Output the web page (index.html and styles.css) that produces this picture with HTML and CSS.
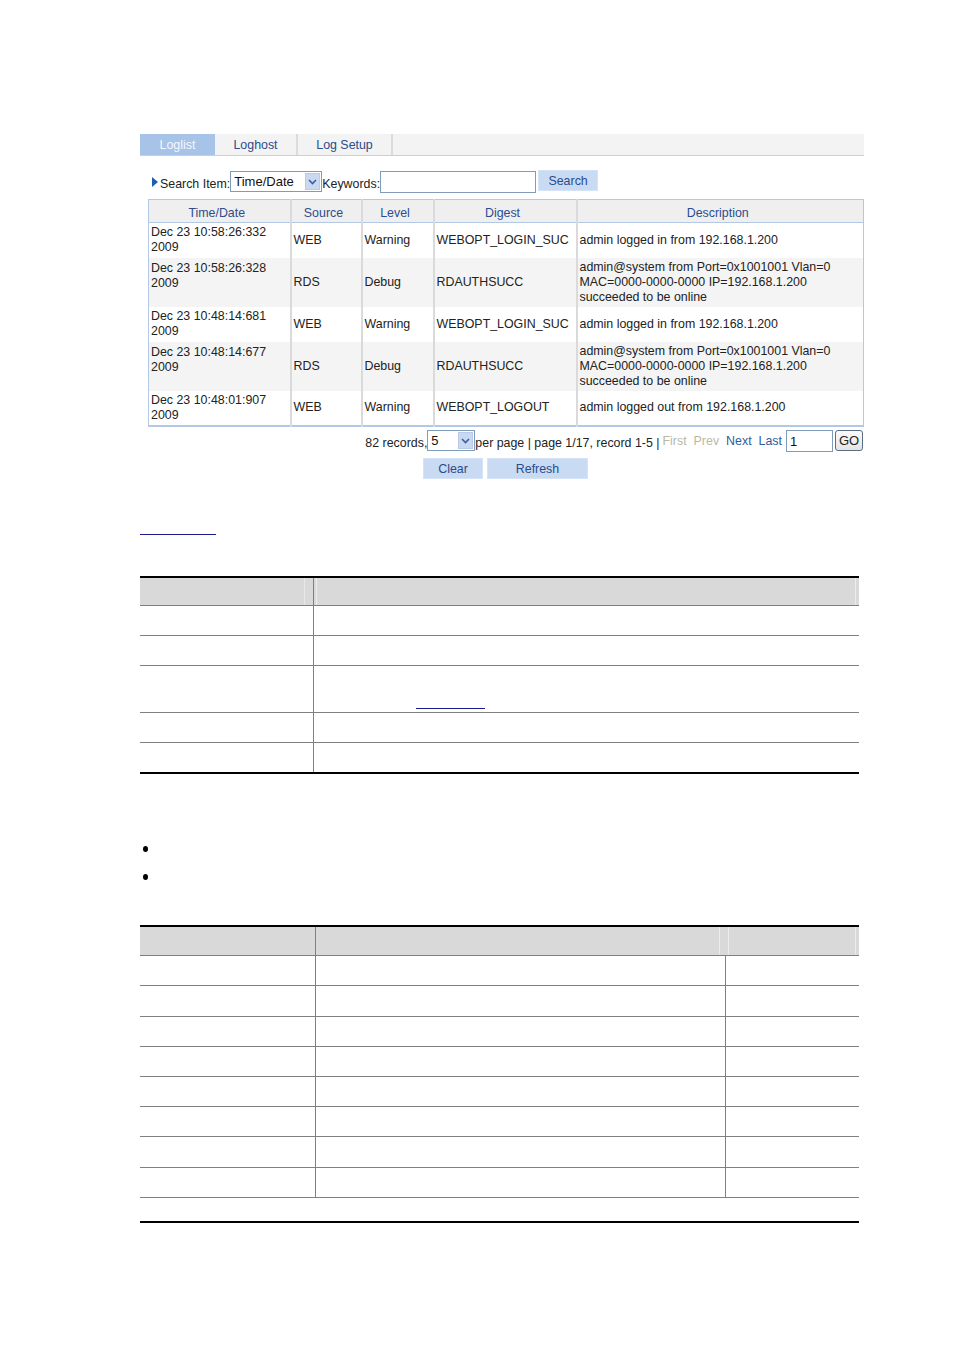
FILE: index.html
```html
<!DOCTYPE html>
<html>
<head>
<meta charset="utf-8">
<link rel="stylesheet" href="styles.css">
</head>
<body>
<div class="page">
  <div class="webui">
    <div class="tabs">
      <div class="tab tab-active">Loglist</div>
      <div class="tab tab-loghost">Loghost</div>
      <div class="tab tab-setup">Log Setup</div>
    </div>

    <div class="search-row">
      <span class="tri"></span>
      <span class="lbl">Search Item:</span>
      <div class="select sel-item">
        <span class="sel-text">Time/Date</span>
        <span class="sel-btn"><svg width="9" height="6" viewBox="0 0 9 6"><path d="M1 1 L4.5 4.5 L8 1" fill="none" stroke="#3d5f99" stroke-width="1.6"/></svg></span>
      </div>
      <span class="lbl">Keywords:</span>
      <div class="input kw"></div>
      <div class="btn btn-search">Search</div>
    </div>

    <table class="log">
      <colgroup>
        <col class="c1"><col class="c2"><col class="c3"><col class="c4"><col class="c5">
      </colgroup>
      <thead>
        <tr><th>Time/Date</th><th>Source</th><th>Level</th><th>Digest</th><th>Description</th></tr>
      </thead>
      <tbody>
        <tr class="r2l"><td>Dec 23 10:58:26:332<br>2009</td><td>WEB</td><td>Warning</td><td>WEBOPT_LOGIN_SUC</td><td>admin logged in from 192.168.1.200</td></tr>
        <tr class="alt r3l"><td class="top">Dec 23 10:58:26:328<br>2009</td><td>RDS</td><td>Debug</td><td>RDAUTHSUCC</td><td>admin@system from Port=0x1001001 Vlan=0<br>MAC=0000-0000-0000 IP=192.168.1.200<br>succeeded to be online</td></tr>
        <tr class="r2l"><td>Dec 23 10:48:14:681<br>2009</td><td>WEB</td><td>Warning</td><td>WEBOPT_LOGIN_SUC</td><td>admin logged in from 192.168.1.200</td></tr>
        <tr class="alt r3l"><td class="top">Dec 23 10:48:14:677<br>2009</td><td>RDS</td><td>Debug</td><td>RDAUTHSUCC</td><td>admin@system from Port=0x1001001 Vlan=0<br>MAC=0000-0000-0000 IP=192.168.1.200<br>succeeded to be online</td></tr>
        <tr class="r2l last"><td>Dec 23 10:48:01:907<br>2009</td><td>WEB</td><td>Warning</td><td>WEBOPT_LOGOUT</td><td>admin logged out from 192.168.1.200</td></tr>
      </tbody>
    </table>

    <div class="pager">
      <span class="ptext">82 records,</span>
      <div class="select sel-page">
        <span class="sel-text">5</span>
        <span class="sel-btn"><svg width="9" height="6" viewBox="0 0 9 6"><path d="M1 1 L4.5 4.5 L8 1" fill="none" stroke="#3d5f99" stroke-width="1.6"/></svg></span>
      </div>
      <span class="ptext">per page | page 1/17, record 1-5 |</span>
      <span class="plink off">First</span>
      <span class="plink off">Prev</span>
      <span class="plink on">Next</span>
      <span class="plink on">Last</span>
      <div class="input pgnum">1</div>
      <div class="go">GO</div>
    </div>

    <div class="actions">
      <div class="btn btn-clear">Clear</div>
      <div class="btn btn-refresh">Refresh</div>
    </div>
  </div>

  <div class="doc">
    <div class="link-line"></div>

    <table class="dtab dtab1">
      <colgroup><col class="d1a"><col class="d1b"></colgroup>
      <tr class="dhead"><th class="hl"></th><th class="hr"></th></tr>
      <tr><td></td><td></td></tr>
      <tr><td></td><td></td></tr>
      <tr class="tall"><td></td><td><span class="inline-link"></span></td></tr>
      <tr><td></td><td></td></tr>
      <tr class="last"><td></td><td></td></tr>
    </table>

    <ul class="bullets">
      <li></li>
      <li></li>
    </ul>

    <table class="dtab dtab2">
      <colgroup><col class="d2a"><col class="d2b"><col class="d2c"></colgroup>
      <tr class="dhead"><th></th><th class="hm"></th><th class="hr"></th></tr>
      <tr><td></td><td></td><td></td></tr>
      <tr class="t31"><td></td><td></td><td></td></tr>
      <tr><td></td><td></td><td></td></tr>
      <tr><td></td><td></td><td></td></tr>
      <tr><td></td><td></td><td></td></tr>
      <tr><td></td><td></td><td></td></tr>
      <tr class="t31"><td></td><td></td><td></td></tr>
      <tr class="gray-last"><td></td><td></td><td></td></tr>
    </table>

    <div class="foot-line"></div>
  </div>
</div>
</body>
</html>
```

FILE: styles.css
```css
* { box-sizing: border-box; }
html, body { margin: 0; padding: 0; background: #ffffff; }
body { font-family: "Liberation Sans", Arial, sans-serif; font-size: 12.4px; color: #222; }

.page { padding: 134px 0 0 140px; width: 954px; }

.webui { width: 724px; }

/* tabs */
.tabs { display: flex; height: 22px; background: #f3f3f3; border-bottom: 1px solid #cfcfcf; }
.tab { height: 21px; line-height: 22px; text-align: center; color: #2b4b8a; font-size: 12.4px; }
.tab-active { width: 75px; background: #a8c3e8; color: #f4f7fc; }
.tab-loghost { width: 83px; border-right: 2px solid #dcdcdc; }
.tab-setup { width: 95px; border-right: 2px solid #dcdcdc; }

/* search row */
.search-row { display: flex; align-items: center; margin-top: 14px; padding-left: 12px; height: 23px; }
.tri { width: 0; height: 0; border-top: 5px solid transparent; border-bottom: 5px solid transparent; border-left: 6px solid #1f5fae; margin-right: 2px; margin-top: 1px; }
.lbl { color: #222; font-size: 12.4px; padding-top: 5px; }
.select { display: flex; align-items: center; justify-content: space-between; border: 1px solid #7f9db9; background: #fff; height: 21px; padding: 0 1px 0 3px; }
.sel-text { font-size: 13px; color: #111; }
.sel-btn { width: 15px; height: 17px; background: #c9d9f2; border: 1px solid #b9cbe8; display: flex; align-items: center; justify-content: center; }
.sel-item { width: 92px; margin-left: 0; }
.input { border: 1px solid #7f9db9; background: #fff; height: 22px; }
.kw { width: 156px; margin-left: 0; }
.btn { height: 21px; line-height: 21px; background: #c9daf3; border: 1px solid #d6e2f5; color: #2b4b8a; text-align: center; font-size: 12.4px; }
.btn-search { width: 60px; margin-left: 2px; margin-top: -3px; }

/* log table */
.log { margin: 6px 0 0 8px; width: 715px; border-collapse: collapse; border: 1px solid #b3c8e6; border-bottom-width: 2px; table-layout: fixed; }
.log col.c1 { width: 142px; }
.log col.c2 { width: 71px; }
.log col.c3 { width: 72px; }
.log col.c4 { width: 143px; }
.log col.c5 { width: 287px; }
.log th { height: 23px; background: #efefef; color: #2c4d8d; font-weight: normal; font-size: 12.4px; border-right: 2px solid #dadada; border-bottom: 1px solid #b3c8e6; padding: 4px 5px 0 0; text-align: center; }
.log th:last-child { border-right: none; }
.log td { padding: 2px 2px 2px 2px; line-height: 15px; vertical-align: middle; border-right: 2px solid #dadada; font-size: 12.4px; color: #222; white-space: nowrap; overflow: hidden; }
.log td:last-child { border-right: none; }
.log tr.r2l td { height: 35px; }
.log tr.r3l td { height: 49px; }
.log tr.last td { height: 33px; }
.log tr.alt td { background: #f4f4f4; }
.log tr.alt td.top { vertical-align: top; padding-top: 3px; }

/* pager */
.pager { display: flex; align-items: center; justify-content: flex-end; margin-top: 3px; padding-right: 1px; height: 22px; }
.ptext { color: #222; font-size: 12.4px; padding-top: 5px; }
.sel-page { width: 48px; height: 21px; padding-left: 3px; }
.sel-page .sel-text { font-size: 13px; }
.plink { font-size: 12.4px; margin-left: 7px; }
.plink.off { color: #b9b9a8; }
.plink.on { color: #2e5d9f; }
.ptext + .plink { margin-left: 3px; }
.pgnum { width: 47px; height: 22px; margin-left: 4px; font-size: 13px; padding: 3px 0 0 3px; color: #111; }
.go { width: 28px; height: 21px; margin-left: 2px; border: 1px solid #5a6d85; border-radius: 3px; background: linear-gradient(#fbfbfb, #e4e4e4); text-align: center; line-height: 19px; font-size: 13px; color: #222; }

/* actions */
.actions { display: flex; justify-content: center; gap: 4px; margin: 6px 0 0 8px; width: 715px; }
.btn-clear { width: 60px; }
.btn-refresh { width: 101px; }

/* doc */
.doc { width: 719px; }
.link-line { width: 76px; height: 1px; background: #1a1a8c; margin-top: 55px; }

.dtab { width: 719px; border-collapse: collapse; table-layout: fixed; }
.dtab td, .dtab th { padding: 0; font-weight: normal; }
.dtab1 { margin-top: 41px; border-top: 2px solid #000; border-bottom: 2px solid #000; }
.d1a { width: 173px; }
.dtab .dhead th { height: 29px; background: #d9d9d9; border-bottom: 1px solid #808080; }
.dtab1 .dhead th.hl { box-shadow: inset -8px 0 0 #d9d9d9, inset -9px 0 0 #e8e8e8; border-right: 1px solid #808080; }
.dtab .dhead th.hr { box-shadow: inset 2px 0 0 #d9d9d9, inset 3px 0 0 #ececec, inset -3px 0 0 #d9d9d9, inset -4px 0 0 #ececec; }
.dtab td { height: 30px; border-bottom: 1px solid #808080; }
.dtab td:first-child { border-right: 1px solid #808080; }
.dtab1 tr.tall td { height: 47px; }
.dtab1 tr.last td { border-bottom: none; }
.inline-link { display: block; width: 69px; height: 1px; background: #1a1a8c; margin: 38px 0 0 102px; }

.bullets { list-style: none; margin: 60px 0 0 0; padding: 0; }
.bullets li { height: 28px; position: relative; }
.bullets li::before { content: ""; position: absolute; left: 3px; top: 12px; width: 5px; height: 6px; border-radius: 50%; background: #000; }

.dtab2 { margin-top: 35px; border-top: 2px solid #000; }
.dtab2 .dhead th { height: 30px; }
.d2a { width: 175px; }
.d2b { width: 410px; }
.dtab2 td:nth-child(2) { border-right: 1px solid #808080; }
.dtab2 tr.t31 td { height: 31px; }
.dtab2 .dhead th:first-child { border-right: 1px solid #808080; }
.dtab2 .dhead th.hm { box-shadow: inset -5px 0 0 #d9d9d9, inset -6px 0 0 #ececec; border-right: 1px solid #d9d9d9; }
.dtab2 tr.gray-last td { border-bottom: 1px solid #808080; }

.foot-line { height: 2px; background: #000; margin-top: 23px; }
```
